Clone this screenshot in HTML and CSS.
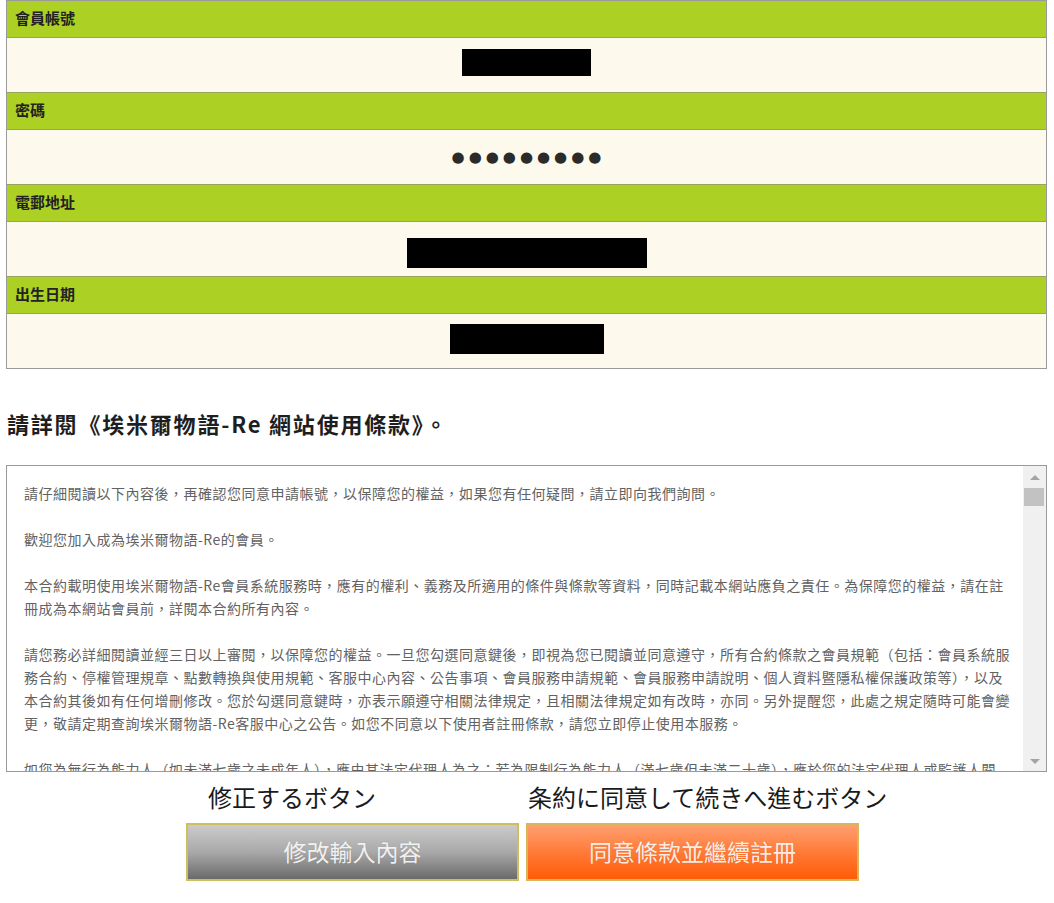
FILE: index.html
```html
<!DOCTYPE html>
<html lang="zh-Hant">
<head>
<meta charset="utf-8">
<title>會員註冊確認</title>
<link rel="stylesheet" href="styles.css">
</head>
<body>
<div class="page">
  <section class="fields">
    <div class="f-head">會員帳號</div>
    <div class="f-cell"><span class="redact r-account"></span></div>
    <div class="f-head">密碼</div>
    <div class="f-cell"><span class="dots">●●●●●●●●●</span></div>
    <div class="f-head">電郵地址</div>
    <div class="f-cell"><span class="redact r-mail"></span></div>
    <div class="f-head">出生日期</div>
    <div class="f-cell last"><span class="redact r-birth"></span></div>
  </section>

  <h2 class="terms-title">請詳閱《埃米爾物語-Re 網站使用條款》。</h2>

  <div class="terms">
    <div class="terms-body">
      <p>請仔細閱讀以下內容後，再確認您同意申請帳號，以保障您的權益，如果您有任何疑問，請立即向我們詢問。</p>
      <p>歡迎您加入成為埃米爾物語-Re的會員。</p>
      <p>本合約載明使用埃米爾物語-Re會員系統服務時，應有的權利、義務及所適用的條件與條款等資料，同時記載本網站應負之責任。為保障您的權益，請在註冊成為本網站會員前，詳閱本合約所有內容。</p>
      <p>請您務必詳細閱讀並經三日以上審閱，以保障您的權益。一旦您勾選同意鍵後，即視為您已閱讀並同意遵守，所有合約條款之會員規範（包括：會員系統服務合約、停權管理規章、點數轉換與使用規範、客服中心內容、公告事項、會員服務申請規範、會員服務申請說明、個人資料暨隱私權保護政策等），以及本合約其後如有任何增刪修改。您於勾選同意鍵時，亦表示願遵守相關法律規定，且相關法律規定如有改時，亦同。另外提醒您，此處之規定隨時可能會變更，敬請定期查詢埃米爾物語-Re客服中心之公告。如您不同意以下使用者註冊條款，請您立即停止使用本服務。</p>
      <p class="last-p">如您為無行為能力人（如未滿七歲之未成年人），應由其法定代理人為之；若為限制行為能力人（滿七歲但未滿二十歲），應於您的法定代理人或監護人閱讀、瞭解並同意本合約之所有內容後，方得註冊為會員及使用本服務。</p>
    </div>
    <div class="vscroll" aria-hidden="true">
      <span class="vs-btn vs-up"></span>
      <span class="vs-track"><span class="vs-thumb"></span></span>
      <span class="vs-btn vs-down"></span>
    </div>
  </div>

  <div class="notes">
    <p class="note">修正するボタン</p>
    <p class="note">条約に同意して続きへ進むボタン</p>
  </div>

  <div class="actions">
    <button type="button" class="btn btn-gray">修改輸入內容</button>
    <button type="button" class="btn btn-orange">同意條款並繼續註冊</button>
  </div>
</div>
</body>
</html>
```

FILE: styles.css
```css
* { box-sizing: border-box; }

html, body {
  margin: 0;
  padding: 0;
  background: #ffffff;
}

body {
  font-family: "Noto Sans CJK TC", "Noto Sans", sans-serif;
  color: #222;
}

.page {
  padding: 0 7px 0 6px;
}

/* ---------- field table ---------- */
.fields {
  border: 1px solid #9a9a9a;
  border-bottom: none;
}

.f-head {
  height: 37px;
  background: #acd024;
  border-bottom: 1px solid #98a35c;
  padding-left: 8px;
  font-size: 15px;
  font-weight: 700;
  line-height: 33px;
  color: #222;
}

.f-cell {
  height: 55px;
  background: #fdfaed;
  border-bottom: 1px solid #98a35c;
  display: flex;
  align-items: center;
  justify-content: center;
}

.f-cell.last {
  border-bottom: 1px solid #9a9a9a;
}

.redact {
  display: block;
  background: #000;
}

.r-account { width: 129px; height: 27px; margin-top: -5px; }
.r-mail    { width: 240px; height: 30px; margin-top: 8px; }
.r-birth   { width: 154px; height: 30px; margin-top: -5px; }

.dots {
  font-family: "DejaVu Sans", sans-serif;
  font-size: 15px;
  letter-spacing: 4px;
  color: #2b2b2b;
  line-height: 1;
  padding-left: 4px;
}

/* ---------- terms ---------- */
.terms-title {
  margin: 39px 0 27px 1px;
  font-size: 22px;
  line-height: 30px;
  font-weight: 700;
  letter-spacing: 1.8px;
  color: #1e1e1e;
}

.terms {
  height: 307px;
  border: 1px solid #9a9a9a;
  display: flex;
  overflow: hidden;
}

.terms-body {
  flex: 1;
  min-width: 0;
  overflow-y: auto;
  scrollbar-width: none;
  padding: 16px 8px 0 17px;
  font-size: 14px;
  line-height: 23px;
  letter-spacing: 0.5px;
  color: #626262;
}

.terms-body p {
  margin: 0 0 23px;
}

.terms-body .last-p {
  margin-bottom: 0;
}

.vscroll {
  width: 23px;
  flex: none;
  background: #f0f0f0;
  display: flex;
  flex-direction: column;
}

.vs-btn {
  height: 22px;
  flex: none;
  display: flex;
  align-items: center;
  justify-content: center;
}

.vs-btn::before {
  content: "";
  width: 0;
  height: 0;
  border-left: 5px solid transparent;
  border-right: 5px solid transparent;
}

.vs-up::before {
  border-bottom: 5px solid #a3a3a3;
  margin-top: 1px;
}

.vs-down::before {
  border-top: 5px solid #a3a3a3;
  margin-top: 2px;
}

.vs-track {
  flex: 1;
  display: flex;
  flex-direction: column;
  padding: 0 2px 0 1px;
}

.vs-thumb {
  height: 18px;
  background: #c2c2c2;
}

/* ---------- actions ---------- */
.notes {
  display: flex;
  gap: 152px;
  padding-left: 202px;
  margin-top: 10px;
}

.note {
  margin: 0;
  font-family: "Noto Sans CJK JP", "Noto Sans", sans-serif;
  font-size: 24px;
  line-height: 30px;
  color: #1a1a1a;
  white-space: nowrap;
}

.actions {
  display: flex;
  gap: 7px;
  padding-left: 180px;
  margin-top: 11px;
}

.btn {
  width: 333px;
  height: 58px;
  border: 2px solid #cdbf5f;
  font-family: "Noto Sans CJK TC", "Noto Sans", sans-serif;
  font-size: 23px;
  color: rgba(255, 255, 255, 0.9);
  padding: 0 0 2px;
  cursor: pointer;
  text-shadow: 0 0 1px rgba(0, 0, 0, 0.15);
}

.btn-gray {
  background: linear-gradient(to bottom, #cbcbcb 0%, #a9a9a9 50%, #6a6a6a 100%);
}

.btn-orange {
  background: linear-gradient(to bottom, #ff9f70 0%, #ff7b38 50%, #ff5c05 100%);
  border-color: #d9b65a;
}
```
